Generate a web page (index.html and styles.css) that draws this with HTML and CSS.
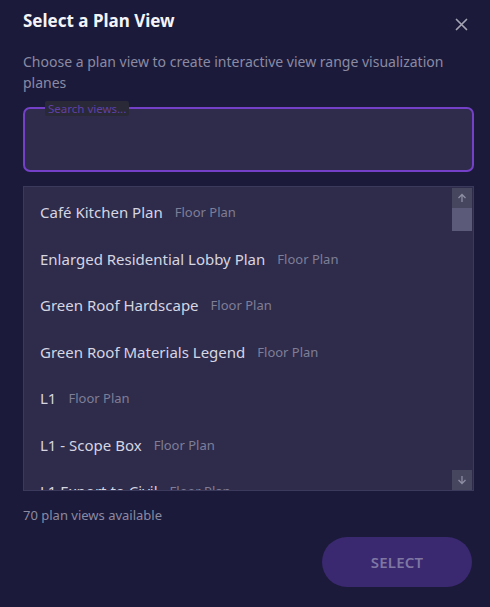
FILE: index.html
```html
<!DOCTYPE html>
<html lang="en">
<head>
  <meta charset="UTF-8">
  <title>Select a Plan View</title>
  <link rel="stylesheet" href="styles.css">
</head>
<body>
  <div class="dialog">
    <div class="dialog-head">
      <h2>Select a Plan View</h2>
      <button class="close-btn" aria-label="Close">
        <svg width="13" height="13" viewBox="0 0 13 13"><path d="M1.5 1.5 L11.5 11.5 M11.5 1.5 L1.5 11.5" stroke="#a3a3b3" stroke-width="1.7" stroke-linecap="round"/></svg>
      </button>
    </div>
    <p class="desc">Choose a plan view to create interactive view range visualization planes</p>

    <div class="search">
      <span class="search-label">Search views...</span>
    </div>

    <div class="list-box">
      <ul class="view-list">
        <li><span class="name">Café Kitchen Plan</span><span class="type">Floor Plan</span></li>
        <li><span class="name">Enlarged Residential Lobby Plan</span><span class="type">Floor Plan</span></li>
        <li><span class="name">Green Roof Hardscape</span><span class="type">Floor Plan</span></li>
        <li><span class="name">Green Roof Materials Legend</span><span class="type">Floor Plan</span></li>
        <li><span class="name">L1</span><span class="type">Floor Plan</span></li>
        <li><span class="name">L1 - Scope Box</span><span class="type">Floor Plan</span></li>
        <li><span class="name">L1 Export to Civil</span><span class="type">Floor Plan</span></li>
      </ul>
      <div class="scrollbar">
        <div class="sb-btn">
          <svg width="10" height="10" viewBox="0 0 10 10"><path d="M5 9 V1.5 M1.5 5 L5 1.5 L8.5 5" stroke="#8d8da3" stroke-width="1.3" fill="none"/></svg>
        </div>
        <div class="sb-thumb"></div>
        <div class="sb-track"></div>
        <div class="sb-btn">
          <svg width="10" height="10" viewBox="0 0 10 10"><path d="M5 1 V8.5 M1.5 5 L5 8.5 L8.5 5" stroke="#8d8da3" stroke-width="1.3" fill="none"/></svg>
        </div>
      </div>
    </div>

    <p class="count">70 plan views available</p>

    <div class="actions">
      <button class="select-btn">SELECT</button>
    </div>
  </div>
</body>
</html>
```

FILE: styles.css
```css
:root {
  --bg: #1b1a3a;
  --panel: #2e2c4a;
  --border: #3c3a5c;
  --accent: #7440c8;
  --text: #d6d5e2;
  --muted: #8b8aa3;
}

* {
  margin: 0;
  padding: 0;
  box-sizing: border-box;
}

body {
  width: 490px;
  height: 607px;
  background: var(--bg);
  font-family: "Noto Sans", "Open Sans", sans-serif;
  color: var(--text);
  overflow: hidden;
}

.dialog {
  padding: 9px 16px 0 23px;
}

.dialog-head {
  display: flex;
  justify-content: space-between;
  align-items: flex-start;
  height: 40px;
  padding-right: 6px;
}

.dialog-head h2 {
  font-size: 17px;
  font-weight: 700;
  color: #f4f4f8;
  line-height: 24px;
}

.close-btn {
  background: none;
  border: none;
  margin-top: 9px;
  width: 13px;
  height: 13px;
  display: flex;
}

.desc {
  font-size: 14px;
  line-height: 21px;
  color: var(--muted);
  padding-right: 20px;
  margin-top: 2px;
}

.search {
  position: relative;
  margin-top: 14px;
  width: 451px;
  height: 65px;
  border: 2px solid var(--accent);
  border-radius: 7px;
  background: var(--panel);
}

.search-label {
  position: absolute;
  left: 20px;
  top: -8px;
  padding: 0 3px;
  font-size: 11.5px;
  line-height: 15px;
  color: #6140a6;
  background: #2a2938;
  border-radius: 2px;
}

.list-box {
  margin-top: 14px;
  width: 451px;
  height: 305px;
  border: 1px solid var(--border);
  background: var(--panel);
  display: flex;
  overflow: hidden;
}

.view-list {
  list-style: none;
  flex: 1;
  padding: 2px 0 0 16px;
}

.view-list li {
  height: 46.5px;
  display: flex;
  align-items: center;
  gap: 12px;
  white-space: nowrap;
}

.view-list .name {
  font-size: 15px;
  color: var(--text);
}

.view-list .type {
  font-size: 13px;
  color: #7f7e98;
}

.scrollbar {
  width: 20px;
  margin-right: 1px;
  display: flex;
  flex-direction: column;
  padding-top: 1px;
}

.sb-btn {
  height: 20px;
  background: #47465f;
  display: flex;
  align-items: center;
  justify-content: center;
}

.sb-thumb {
  height: 23px;
  background: #5b5a78;
}

.sb-track {
  flex: 1;
}

.count {
  margin-top: 15px;
  font-size: 13px;
  color: var(--muted);
}

.actions {
  display: flex;
  justify-content: flex-end;
  margin-top: 13px;
  padding-right: 2px;
}

.select-btn {
  width: 150px;
  height: 50px;
  border: none;
  border-radius: 25px;
  background: #3a2870;
  color: #7f77a2;
  font-family: inherit;
  font-size: 15px;
  font-weight: 600;
  letter-spacing: 0.2px;
}
```
